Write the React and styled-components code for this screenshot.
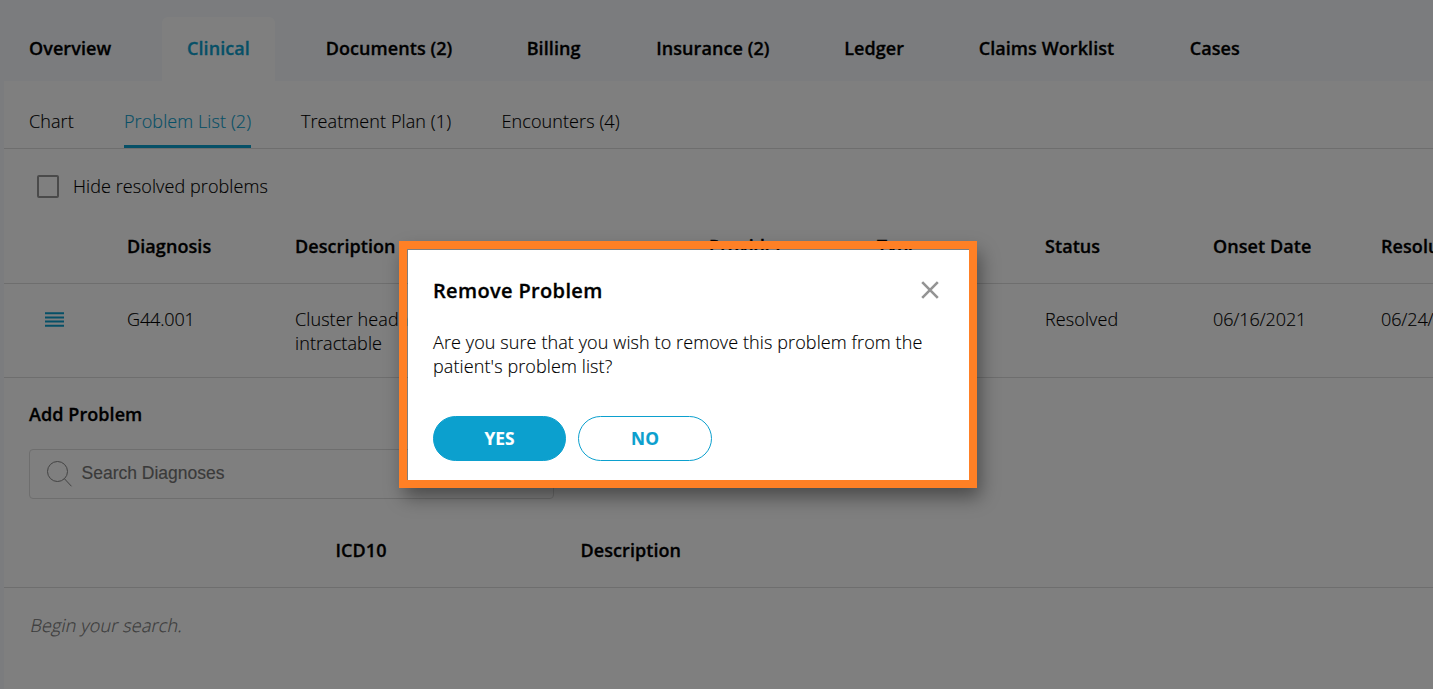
import React from "react";
import styled, { createGlobalStyle, css } from "styled-components";

const Global = createGlobalStyle`
  * { box-sizing: border-box; }
  body { margin: 0; overflow: hidden; background: #f9fafc; }
`;

const heading = css`
  font-weight: 600;
  letter-spacing: 0.07px;
  -webkit-text-stroke: 0.3px currentColor;
`;

const Page = styled.div`
  position: relative;
  width: 1433px;
  height: 689px;
  overflow: hidden;
  padding-left: 4px;
  background: #f6f8fc;
  font-family: "Open Sans", sans-serif;
  font-size: 18px;
  font-weight: 300;
  line-height: 24px;
  letter-spacing: 0.09px;
  -webkit-text-stroke: 0.15px currentColor;
  color: #000;
`;

const MainTabs = styled.nav`
  display: flex;
  height: 81px;
  margin-left: -4px;
  padding: 17px 0 0 4px;
  background: #f6f9fc;
`;

const MainTab = styled.a`
  ${heading}
  flex: none;
  width: ${(p) => p.$width}px;
  margin-right: 25px;
  padding: 19px 0 0 25px;
  white-space: nowrap;
  border-radius: 6px 6px 0 0;
  ${(p) => p.$active && css`
    margin-right: 25.7px;
    background: #fff;
    color: #0ca0ce;
  `}
`;

const Panel = styled.main`
  height: 608px;
  background: #fff;
`;

const SubTabs = styled.nav`
  display: flex;
  height: 68px;
  gap: 50px;
  padding-left: 25px;
  border-bottom: 1px solid #dcdcdc;
`;

const SubTab = styled.a`
  height: 67px;
  width: ${(p) => p.$width}px;
  padding-top: 28px;
  white-space: nowrap;
  ${(p) => p.$active && css`
    color: #0ca0ce;
    border-bottom: 3px solid #0ca0ce;
  `}
`;

const FilterRow = styled.label`
  display: flex;
  align-items: flex-start;
  height: 75px;
  padding: 25px 0 0 33px;
  gap: 14px;
`;

const Checkbox = styled.span`
  width: 22px;
  height: 23px;
  margin-top: 1px;
  border: 2px solid #949494;
  border-radius: 2px;
`;

const TableRow = styled.div`
  display: grid;
  grid-template-columns: 98px 168px 414px 168px 168px 168px 168px 168px;
  width: 1600px;
  padding-left: 25px;
  border-bottom: 1px solid #dcdcdc;
  height: ${(p) => p.$height}px;
  padding-top: ${(p) => p.$top}px;
  ${(p) => p.$head && heading}
`;

const Cell = styled.div`
  white-space: pre-line;
  letter-spacing: ${(p) => (p.$numeric ? "-0.13px" : "inherit")};
`;

const MenuIcon = styled.svg`
  display: block;
  margin: 5px 0 0 16px;
`;

const SectionTitle = styled.h2`
  ${heading}
  margin: 0;
  padding: 24px 25px 0;
  height: 71px;
  font-size: 18px;
`;

const SearchBox = styled.div`
  display: flex;
  align-items: center;
  width: 525px;
  height: 50px;
  margin-left: 25px;
  padding: 0 0 2px 17px;
  gap: 8.5px;
  border: 1px solid #dcdcdc;
  border-radius: 4px;
  font-family: "Liberation Sans", Arial, sans-serif;
  font-size: 17.5px;
  letter-spacing: 0;
  font-weight: 400;
  color: #757575;
`;

const SearchIcon = styled.svg`
  margin-top: 2px;
`;

const ResultsHead = styled.div`
  ${heading}
  display: grid;
  grid-template-columns: 245px 1fr;
  height: 89px;
  padding: 39px 0 0 331.5px;
  border-bottom: 1px solid #dcdcdc;
`;

const Hint = styled.p`
  display: inline-block;
  margin: 25px 26.5px;
  letter-spacing: 0.16px;
  transform: skewX(-12deg);
  color: #757575;
`;

const Overlay = styled.div`
  position: absolute;
  inset: 0;
  background: rgba(0, 0, 0, 0.5);
`;

const Frame = styled.div`
  position: absolute;
  left: 399px;
  top: 241px;
  width: 578px;
  height: 247px;
  border: 8px solid #ff8025;
  padding: 1px 0 0 1px;
  box-shadow: 4px 10px 18px -1px rgba(0, 0, 0, 0.42);
`;

const Dialog = styled.section`
  height: 230px;
  padding: 29px 25px 0;
  background: #fff;
`;

const DialogHeader = styled.header`
  display: flex;
  justify-content: space-between;
  height: 51px;
`;

const DialogTitle = styled.h1`
  ${heading}
  margin: 0;
  font-size: 20px;
  line-height: 24px;
  letter-spacing: 0.35px;
`;

const CloseIcon = styled.svg`
  margin: 2px 5px 0 0;
`;

const Message = styled.p`
  margin: 0;
  height: 86px;
  letter-spacing: 0.1px;
`;

const Actions = styled.div`
  display: flex;
  gap: 12px;
`;

const Button = styled.button`
  width: ${(p) => (p.$primary ? 133 : 134)}px;
  height: 45px;
  padding: 0;
  border: 1px solid #0ca0ce;
  border-radius: 23px;
  font: 700 17.3px/24px "Open Sans", sans-serif;
  background: ${(p) => (p.$primary ? "#0ca0ce" : "#fff")};
  color: ${(p) => (p.$primary ? "#fff" : "#0ca0ce")};
`;

const tabs = [
  ["Overview", 133],
  ["Clinical", 113],
  ["Documents (2)", 176],
  ["Billing", 104.5],
  ["Insurance (2)", 163],
  ["Ledger", 109.5],
  ["Claims Worklist", 186],
  ["Cases", 100],
];

const subTabs = [
  ["Chart", 45],
  ["Problem List (2)", 127],
  ["Treatment Plan (1)", 150.5],
  ["Encounters (4)", 118],
];

const columns = ["", "Diagnosis", "Description", "Provider", "Type", "Status", "Onset Date", "Resolution Date"];
const problem = ["G44.001", "Cluster headache,\nintractable", "", "", "Resolved", "06/16/2021", "06/24/2021"];

export default function App() {
  return (
    <Page>
      <Global />
      <MainTabs>
        {tabs.map(([name, width]) => (
          <MainTab key={name} $width={width} $active={name === "Clinical"}>{name}</MainTab>
        ))}
      </MainTabs>
      <Panel>
        <SubTabs>
          {subTabs.map(([name, width]) => (
            <SubTab key={name} $width={width} $active={name === "Problem List (2)"}>{name}</SubTab>
          ))}
        </SubTabs>
        <FilterRow><Checkbox />Hide resolved problems</FilterRow>
        <TableRow $head $height={60} $top={10}>
          {columns.map((name) => <Cell key={name}>{name}</Cell>)}
        </TableRow>
        <TableRow $height={94} $top={23}>
          <MenuIcon width="19" height="15" viewBox="0 0 19 15" stroke="#0ca0ce" strokeWidth="2">
            <path d="M0 1.2h19M0 5.4h19M0 9.6h19M0 13.8h19" />
          </MenuIcon>
          {problem.map((value, i) => <Cell key={i} $numeric={i > 4 || i === 0}>{value}</Cell>)}
        </TableRow>
        <SectionTitle>Add Problem</SectionTitle>
        <SearchBox>
          <SearchIcon width="26" height="26" viewBox="0 0 26 26" fill="none" stroke="#858585">
            <circle cx="10.5" cy="10.5" r="10" />
            <path d="M17.2 17.5l7.3 7.8" />
          </SearchIcon>
          Search Diagnoses
        </SearchBox>
        <ResultsHead><span>ICD10</span><span>Description</span></ResultsHead>
        <Hint>Begin your search.</Hint>
      </Panel>
      <Overlay />
      <Frame>
        <Dialog role="dialog">
          <DialogHeader>
            <DialogTitle>Remove Problem</DialogTitle>
            <CloseIcon width="18" height="18" viewBox="0 0 18 18" stroke="#949494" strokeWidth="2.6">
              <path d="M1.2 1.2l15.6 15.6M16.8 1.2l-15.6 15.6" />
            </CloseIcon>
          </DialogHeader>
          <Message>Are you sure that you wish to remove this problem from the patient's problem list?</Message>
          <Actions>
            <Button $primary>YES</Button>
            <Button>NO</Button>
          </Actions>
        </Dialog>
      </Frame>
    </Page>
  );
}
